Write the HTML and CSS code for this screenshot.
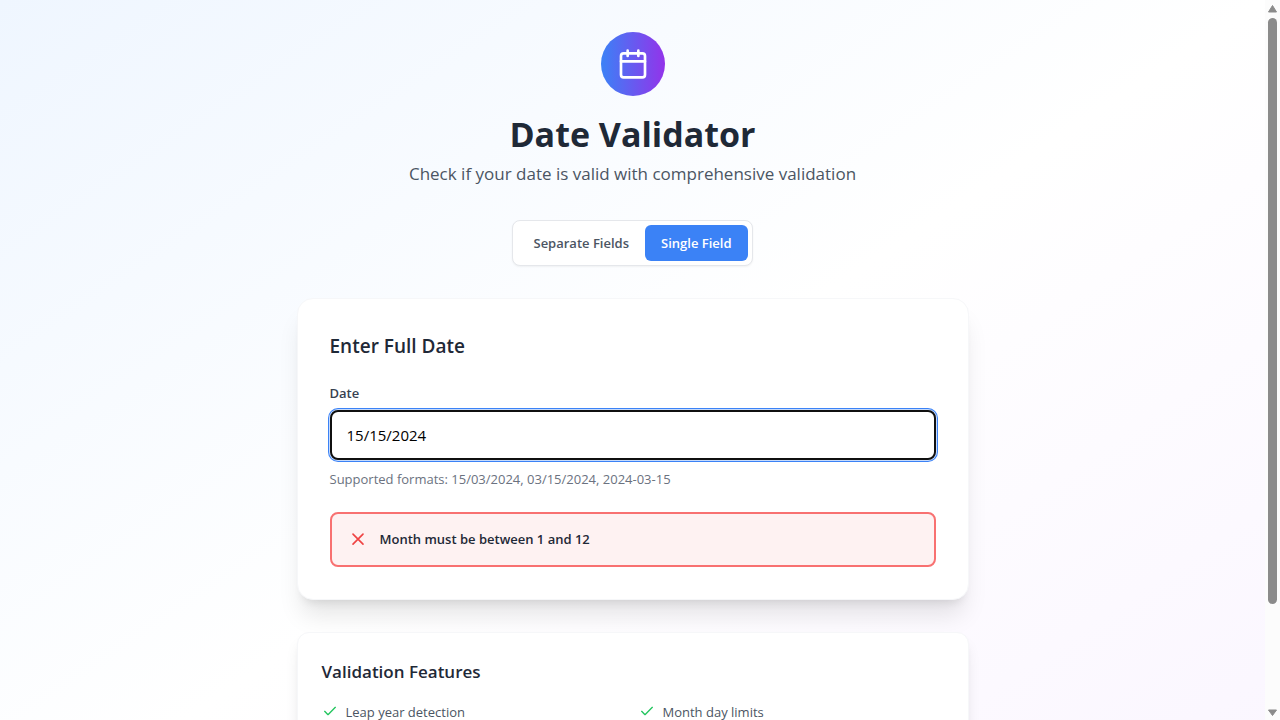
FILE: index.html
```html
<!DOCTYPE html>
<html lang="en">
<head>
<meta charset="utf-8">
<meta name="viewport" content="width=device-width, initial-scale=1">
<title>Date Validator</title>
<link rel="stylesheet" href="styles.css">
</head>
<body>
<div class="window">
  <div class="page">
    <div class="backdrop">
      <main class="container">
        <header class="hero">
          <div class="hero-icon">
            <svg width="32" height="32" viewBox="0 0 24 24" fill="none" stroke="currentColor" stroke-width="2" stroke-linecap="round" stroke-linejoin="round" aria-hidden="true"><path d="M8 2v4M16 2v4M3 10h18"/><rect x="3" y="4" width="18" height="18" rx="2"/></svg>
          </div>
          <h1 class="hero-title">Date Validator</h1>
          <p class="hero-text">Check if your date is valid with comprehensive validation</p>
        </header>
        <div class="toggle">
          <button class="toggle-button" type="button" aria-pressed="false">Separate Fields</button>
          <button class="toggle-button toggle-active" type="button" aria-pressed="true">Single Field</button>
        </div>
        <section class="card form-card">
          <h2 class="card-title">Enter Full Date</h2>
          <label class="label" for="date">Date</label>
          <input class="input" id="date" type="text" value="15/15/2024" aria-describedby="hint error">
          <p class="hint" id="hint">Supported formats: 15/03/2024, 03/15/2024, 2024-03-15</p>
          <div class="alert" id="error" role="alert">
            <svg class="alert-icon" width="20" height="20" viewBox="0 0 24 24" fill="none" stroke="currentColor" stroke-width="2" stroke-linecap="round" aria-hidden="true"><path d="M18 5 6 17M6 5l12 12"/></svg>
            <span>Month must be between 1 and 12</span>
          </div>
        </section>
        <section class="card features-card">
          <h3 class="features-title">Validation Features</h3>
          <ul class="features">
            <li class="feature"><svg class="check" width="16" height="16" viewBox="0 0 24 24" fill="none" stroke="currentColor" stroke-width="2" stroke-linecap="round" stroke-linejoin="round" aria-hidden="true"><path d="M20 5 9 16l-5-5"/></svg>Leap year detection</li>
            <li class="feature"><svg class="check" width="16" height="16" viewBox="0 0 24 24" fill="none" stroke="currentColor" stroke-width="2" stroke-linecap="round" stroke-linejoin="round" aria-hidden="true"><path d="M20 5 9 16l-5-5"/></svg>Month day limits</li>
          </ul>
        </section>
      </main>
    </div>
  </div>
  <div class="scrollbar" aria-hidden="true">
    <svg width="15" height="18" viewBox="0 0 15 18"><path d="M7.500 5.500 11.500 12h-8z" fill="#8b8b8b" stroke="#8b8b8b" stroke-linejoin="round"/></svg>
    <div class="track"><div class="thumb"></div></div>
    <svg width="15" height="18" viewBox="0 0 15 18"><path d="M7.500 13.500 11.500 8h-8z" fill="#8b8b8b" stroke="#8b8b8b" stroke-linejoin="round"/></svg>
  </div>
</div>
</body>
</html>
```

FILE: styles.css
```css
* {
  box-sizing: border-box;
}

body,
h1,
h2,
h3,
p,
ul {
  margin: 0;
  padding: 0;
}

body,
button,
input {
  font-family: "Segoe UI", "Open Sans", "Noto Sans", sans-serif;
}

.window {
  display: flex;
  height: 100vh;
  overflow: hidden;
}

.page {
  flex: 1;
  min-width: 0;
  overflow: hidden;
}

.backdrop {
  min-height: 117vh;
  background: linear-gradient(to bottom right, #eff6ff, #ffffff 50%, #faf5ff);
}

.container {
  max-width: 704px;
  margin: 0 auto;
  padding: 32px 16px;
}

.hero {
  text-align: center;
}

.hero-icon {
  display: flex;
  align-items: center;
  justify-content: center;
  width: 64px;
  height: 64px;
  margin: 0 auto 16px;
  border-radius: 50%;
  color: #ffffff;
  background: linear-gradient(to right, #3b82f6, #9333ea);
}

.hero-title {
  margin-bottom: 4px;
  font-size: 34px;
  line-height: 44px;
  font-weight: 700;
  color: #1f2937;
}

.hero-text {
  font-size: 17px;
  line-height: 28px;
  color: #4b5563;
}

.toggle {
  display: flex;
  width: fit-content;
  margin: 32px auto;
  padding: 4px;
  border: 1px solid #e5e7eb;
  border-radius: 8px;
  background: #ffffff;
  box-shadow: 0 1px 2px rgba(0, 0, 0, 0.05);
}

.toggle-button {
  padding: 8px 16px;
  border: 0;
  border-radius: 6px;
  font-size: 13px;
  line-height: 20px;
  font-weight: 600;
  color: #4b5563;
  background: transparent;
}

.toggle-active {
  color: #ffffff;
  background: #3b82f6;
}

.card {
  border: 1px solid #f6f7f9;
  background: #ffffff;
}

.form-card {
  margin-bottom: 32px;
  padding: 32px;
  border-radius: 16px;
  box-shadow: 0 20px 25px -5px rgba(0, 0, 0, 0.1), 0 8px 10px -6px rgba(0, 0, 0, 0.1);
}

.card-title {
  margin-bottom: 22px;
  font-size: 19px;
  line-height: 30px;
  font-weight: 600;
  color: #1f2937;
}

.label {
  display: block;
  margin-bottom: 7px;
  font-size: 13px;
  line-height: 20px;
  font-weight: 600;
  color: #374151;
}

.input {
  display: block;
  width: 100%;
  padding: 11px 15px;
  border: 2px solid #101010;
  border-radius: 8px;
  outline: none;
  box-shadow: 0 0 0 1px #c5dafc, 0 0 0 2px #3b82f6;
  font-size: 15px;
  line-height: 24px;
  color: #000000;
  background: #ffffff;
}

.hint {
  margin-top: 8px;
  font-size: 13px;
  line-height: 22px;
  color: #6b7280;
}

.alert {
  display: flex;
  align-items: center;
  gap: 12px;
  margin-top: 22px;
  padding: 15px 16px;
  border: 2px solid #f87171;
  border-radius: 8px;
  font-size: 13px;
  line-height: 21px;
  font-weight: 600;
  color: #1f2937;
  background: #fef2f2;
}

.alert-icon {
  color: #ef4444;
}

.features-card {
  padding: 24px;
  border-radius: 12px;
  box-shadow: 0 10px 15px -3px rgba(0, 0, 0, 0.1), 0 4px 6px -4px rgba(0, 0, 0, 0.1);
}

.features-title {
  margin-bottom: 15px;
  font-size: 17px;
  line-height: 30px;
  font-weight: 600;
  color: #1f2937;
}

.features {
  display: grid;
  grid-template-columns: 1fr 1fr;
  gap: 12px;
  list-style: none;
}

.feature {
  display: flex;
  align-items: center;
  gap: 8px;
  font-size: 13px;
  line-height: 20px;
  color: #4b5563;
}

.check {
  color: #22c55e;
}

.scrollbar {
  display: flex;
  flex-direction: column;
  width: 15px;
  background: #fcfcfc;
}

.track {
  flex: 1;
  padding: 0 3px;
}

.thumb {
  height: 85.6%;
  border-radius: 5px;
  background: #8b8b8b;
}
```
